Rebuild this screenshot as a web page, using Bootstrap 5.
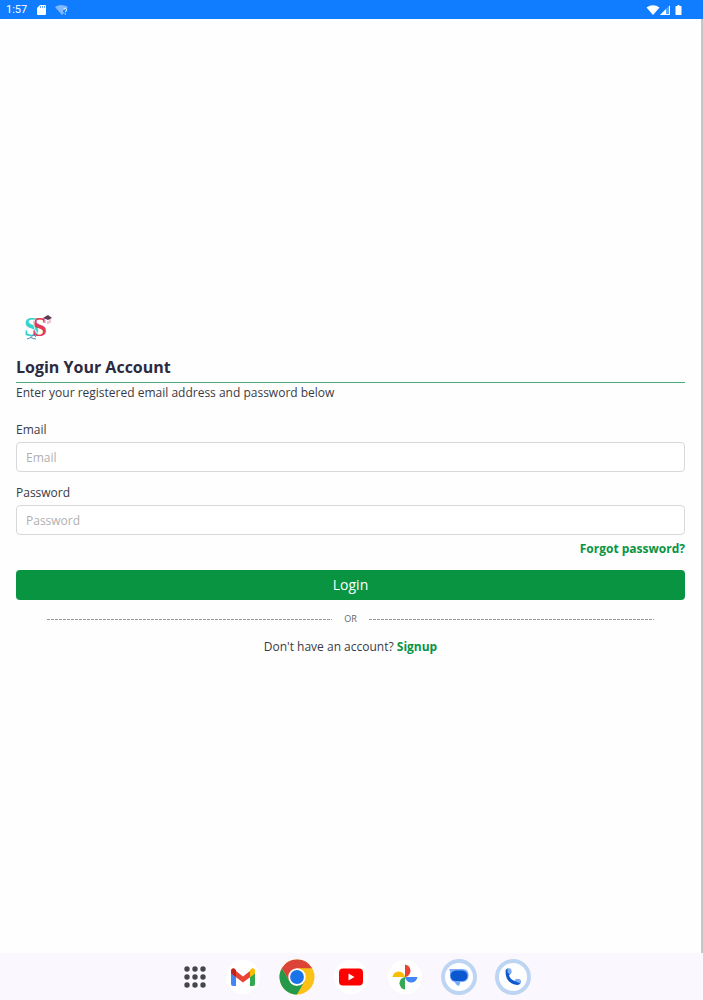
<!DOCTYPE html>
<html lang="en">
<head>
<meta charset="utf-8">
<meta name="viewport" content="width=device-width, initial-scale=1">
<title>Login</title>
<link href="https://cdn.jsdelivr.net/npm/bootstrap@5.3.0/dist/css/bootstrap.min.css" rel="stylesheet">
<style>
  :root { --brand: #089441; --ink: #3a3a44; }
  body { font-family: "Open Sans", sans-serif; font-size: 12px; line-height: 18px; color: var(--ink); background: #fefefe; }
  .status { height: 19px; background: #107cff; color: #fff; padding: 1px 20px 0 6px; font: 11px/18px Roboto, sans-serif; }
  .screen { padding: 0 16px 8px; border-right: 2px solid #c6c6c6; }
  .logo { width: 46px; height: 40px; margin-bottom: 8px; }
  .title { font-size: 16px; line-height: 22px; font-weight: 700; color: #2c2a40; padding-bottom: 4px; border-bottom: 1px solid #4aaa7c; margin: 0; }
  .intro { font-size: 12px; line-height: 20px; margin: 0 0 18px; }
  .field { margin-bottom: 12px; }
  .field.tight { margin-bottom: 5px; }
  .field .form-label { display: block; margin-bottom: 3px; }
  .field .form-control { height: 30px; font-size: 12px; padding: 0 9px; border-color: #d8d8d8; border-radius: 4px; background: #fff; color: var(--ink); }
  .field .form-control::placeholder { color: #b0b0b0; }
  .link { color: var(--brand); font-weight: 700; text-decoration: none; }
  .btn-login { height: 30px; margin: 12px 0; padding: 0; font-size: 14px; line-height: 28px; border-radius: 4px; background: var(--brand); color: #fff; }
  .btn-login:hover { background: #067a35; color: #fff; }
  .divider { padding: 0 31px; gap: 12px; font-size: 9px; line-height: 14px; margin-bottom: 12px; color: #666; }
  .dash { height: 1px; background: repeating-linear-gradient(90deg, #999 0 3px, #fefefe 3px 4px); }
  .dock { height: 47px; background: #faf8fe; gap: 18px; padding-right: 2px; }
  .dock .btn { width: 36px; height: 36px; padding: 0; border: 0; line-height: 0; }
</style>
</head>
<body>
<div class="d-flex flex-column min-vh-100">
  <header class="status d-flex justify-content-between">
    <div class="d-flex align-items-center">
      <span>1:57</span>
      <svg class="ms-2" width="12" height="12" viewBox="0 0 12 12" aria-hidden="true"><path fill="#fff" d="M5 1h5q1 0 1 1v8q0 1-1 1H3q-1 0-1-1V4z"/><path stroke="#107cff" d="M5.500 2v2M7.500 2v2M9.500 2v2" stroke-width=".7"/></svg>
      <svg class="ms-2" width="14" height="12" viewBox="0 0 14 12" aria-hidden="true"><path fill="#7fb8ff" d="M0 3Q6-1 13 3L11 5Q8 4 8 7l1 2-2 2z"/><path fill="none" stroke="#d5e8ff" stroke-width="1.200" d="M8.700 5.800q.3-1.500 1.800-1.300 1.800.5.900 2-1 .6-1 1.700M10.300 9.300v1.200"/></svg>
    </div>
    <div class="d-flex align-items-center">
      <svg width="14" height="12" viewBox="0 0 14 12" aria-hidden="true"><path fill="#fff" d="M.5 3.500Q7-1 13.500 3.500L7 11z"/></svg>
      <svg width="11" height="12" viewBox="0 0 11 12" aria-hidden="true"><path fill="#5aa5ff" d="M0 11L10 1v10z"/><path fill="#fff" d="M0 11l6-6v6z"/><path fill="none" stroke="#fff" d="M1 10.500h8.500V2"/></svg>
      <svg class="ms-1" width="8" height="12" viewBox="0 0 8 12" aria-hidden="true"><path fill="#fff" d="M2.500 1h2v1H6q.5 0 .5.500v8q0 .5-.5.500H1q-.5 0-.5-.5v-8Q.5 2 1 2h1.500z"/></svg>
    </div>
  </header>

  <main class="screen flex-grow-1 d-flex flex-column justify-content-center">
    <svg class="logo" viewBox="0 0 46 40" role="img" aria-label="SS logo">
      <text y="28" font-family="Liberation Serif, serif" font-size="27" font-weight="700"><tspan x="8" fill="#35d3cf">S</tspan><tspan x="16" fill="#dc3f55">S</tspan></text>
      <path d="M19 11q-3 7 2 14" fill="none" stroke="#eee" stroke-width="1"/>
      <path d="M27 10l5-3 4 3-4 2z" fill="#5b3b50"/><path d="M29 12v3M34 11v4M32 13v3" stroke="#d98a98" stroke-width="1"/>
      <path d="M11 31q5-1 6-4m-3 2q3 2 6 2m-3-5l3 3" fill="none" stroke="#4a8fc5" stroke-width="1"/>
    </svg>
    <h1 class="title">Login Your Account</h1>
    <p class="intro">Enter your registered email address and password below</p>
    <form>
      <div class="field">
        <label class="form-label" for="email">Email</label>
        <input class="form-control" type="email" id="email" placeholder="Email">
      </div>
      <div class="field tight">
        <label class="form-label" for="password">Password</label>
        <input class="form-control" type="password" id="password" placeholder="Password">
      </div>
      <div class="text-end"><a class="link" href="#">Forgot password?</a></div>
      <button class="btn btn-login d-block w-100" type="submit">Login</button>
    </form>
    <div class="divider d-flex align-items-center">
      <span class="dash flex-grow-1"></span><span>OR</span><span class="dash flex-grow-1"></span>
    </div>
    <div class="text-center">Don't have an account? <a class="link" href="#">Signup</a></div>
  </main>

  <nav class="dock d-flex justify-content-center align-items-center" aria-label="Dock">
    <button class="btn" type="button" aria-label="All apps"><svg width="36" height="36" viewBox="-6 0 36 36"><g fill="#45464c"><circle cx="10" cy="10" r="2.700"/><circle cx="18" cy="10" r="2.700"/><circle cx="26" cy="10" r="2.700"/><circle cx="10" cy="18" r="2.700"/><circle cx="18" cy="18" r="2.700"/><circle cx="26" cy="18" r="2.700"/><circle cx="10" cy="26" r="2.700"/><circle cx="18" cy="26" r="2.700"/><circle cx="26" cy="26" r="2.700"/></g></svg></button>
    <button class="btn" type="button" aria-label="Mail"><svg width="36" height="36" viewBox="0 0 36 36"><circle cx="18" cy="18" r="17" fill="#fff"/><path fill="#4285f4" d="M6 14l5 4v9H8q-2 0-2-2z"/><path fill="#34a853" d="M30 14l-5 4v9h3q2 0 2-2z"/><path fill="#ea4335" d="M11 12l7 5.500 7-5.500v6.200L18 23.500l-7-5.300z"/><path fill="#c5221f" d="M6 12q0-3 3-2.700L11 11v7.200L6 14.500z"/><path fill="#fbbc04" d="M30 12q0-3-3-2.700L25 11v7.200l5-3.700z"/></svg></button>
    <button class="btn" type="button" aria-label="Browser"><svg width="36" height="36" viewBox="0 0 36 36"><circle cx="18" cy="18" r="17.500" fill="#fbc116"/><path fill="#dc4437" d="M2.800 9.300A17.500 17.500 0 0 1 33.200 9.300H18L10.500 22.300z"/><path fill="#25994a" d="M2.800 9.300L10.500 22.300Q13 26.500 18 26.700L25.500 22.300 18 35.500A17.500 17.500 0 0 1 2.800 9.300z"/><circle cx="18" cy="18" r="8.700" fill="#fff"/><circle cx="18" cy="18" r="6.900" fill="#1a73e8"/></svg></button>
    <button class="btn" type="button" aria-label="Video"><svg width="36" height="36" viewBox="0 0 36 36"><circle cx="18" cy="18" r="17" fill="#fff"/><rect x="6" y="9.500" width="24" height="17" rx="4" fill="#f00"/><path fill="#fff" d="M15.500 14.500v7l6-3.500z"/></svg></button>
    <button class="btn" type="button" aria-label="Photos"><svg width="36" height="36" viewBox="0 0 36 36"><circle cx="18" cy="18" r="17" fill="#fff"/><path fill="#ea4335" d="M18 5.500a6.300 6.300 0 0 1 0 12.500z"/><path fill="#4285f4" d="M30.500 18a6.300 6.300 0 0 1-12.500 0z"/><path fill="#34a853" d="M18 30.500a6.300 6.300 0 0 1 0-12.500z"/><path fill="#fbbc04" d="M5.500 18a6.300 6.300 0 0 1 12.500 0z"/></svg></button>
    <button class="btn" type="button" aria-label="Messages"><svg width="36" height="36" viewBox="0 0 36 36"><circle cx="18" cy="18" r="16" fill="#fff" stroke="#bdd5f3" stroke-width="4"/><path fill="#7baaf7" d="M8 10h14q5.500 0 5.500 6v1q0 5-5.500 6h-2.500l-1.500 4q-3-1-4.500-4-4.500-1-4.500-6v-4q0-2-1-3z"/><rect x="9.500" y="11.500" width="17" height="10.500" rx="5.200" fill="#0b57d0"/></svg></button>
    <button class="btn" type="button" aria-label="Phone"><svg width="36" height="36" viewBox="0 0 36 36"><circle cx="18" cy="18" r="16" fill="#fff" stroke="#bdd5f3" stroke-width="4"/><path fill="#0b57d0" d="M10.500 12q0-2 2-2.500l2.500.5 1 4-2 2.500q1.500 4 5.500 5.500l2.500-2 3.500 1v3q-1 2-3 2Q10.500 25 10.500 12z"/><path fill="#7baaf7" d="M12.500 9.500H15q1 0 1.200 1l.6 3-1.800 2-2.500-2zM21 19.800l3.500.7q1 .3 1 1.500v2.500L19.500 22z"/></svg></button>
  </nav>
</div>
<script src="https://cdn.jsdelivr.net/npm/bootstrap@5.3.0/dist/js/bootstrap.bundle.min.js"></script>
</body>
</html>
